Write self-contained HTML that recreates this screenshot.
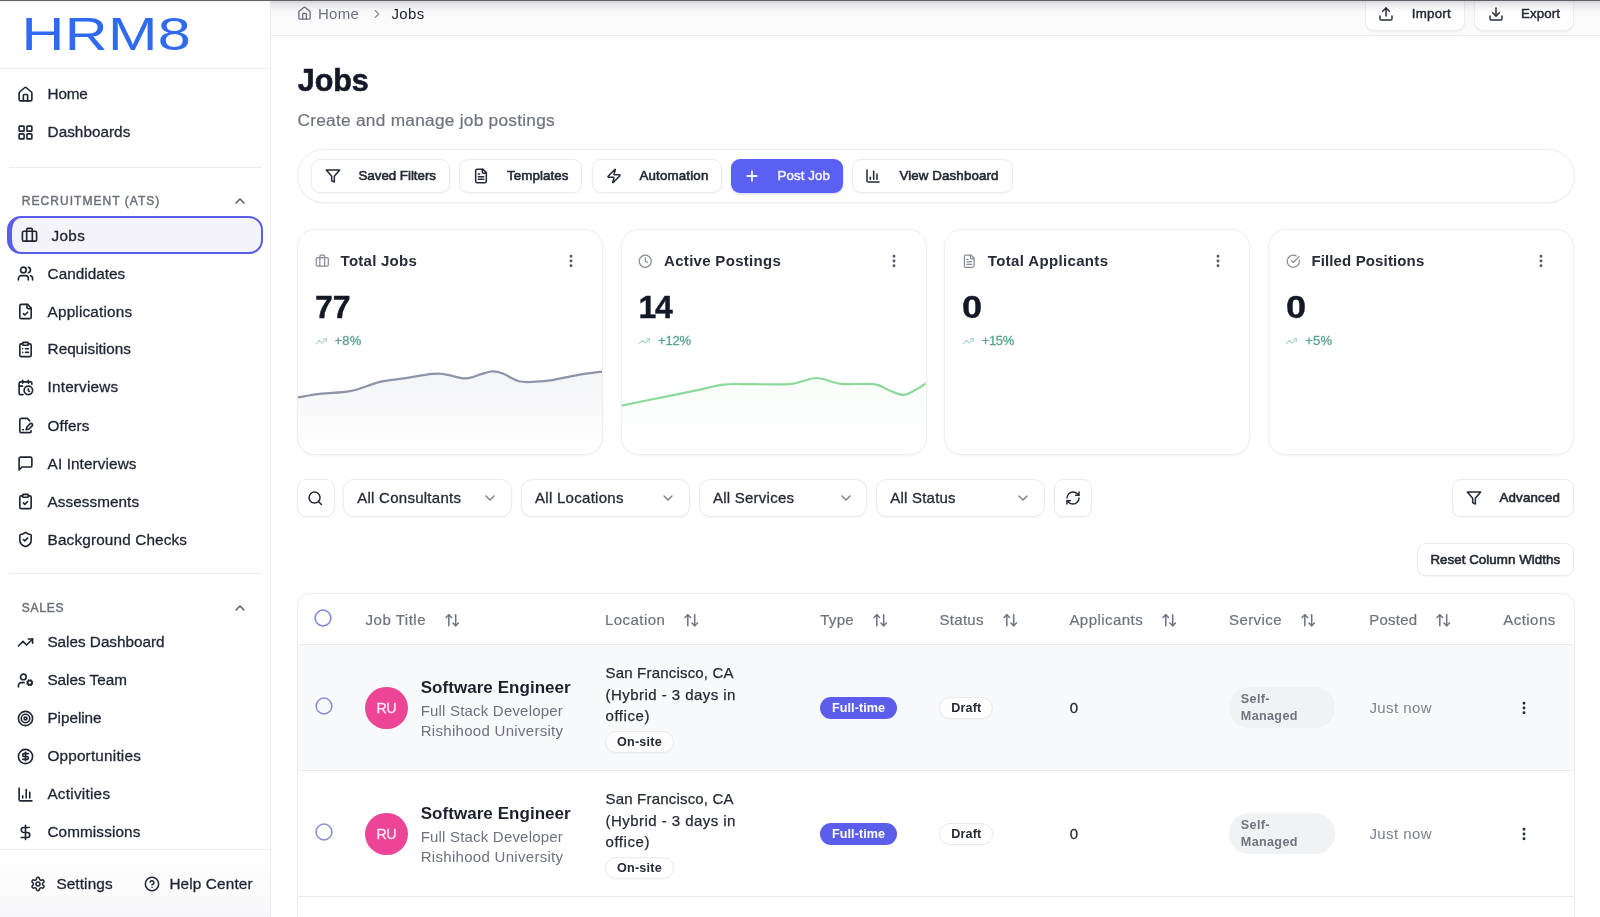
<!DOCTYPE html>
<html lang="en"><head>
<meta charset="utf-8">
<title>Jobs - HRM8</title>
<style>
*{box-sizing:border-box;margin:0;padding:0}
html,body{width:1600px;height:917px;overflow:hidden;background:#fff}
body{font-family:"Liberation Sans",Arial,sans-serif;color:#1c2230;position:relative;-webkit-font-smoothing:antialiased}
.abs{position:absolute}
.t{position:absolute;white-space:nowrap;line-height:1}
svg{position:absolute;overflow:visible}
.ic{fill:none;stroke:#1f2533;stroke-width:2;stroke-linecap:round;stroke-linejoin:round}
/* sidebar */
#app{position:absolute;left:0;top:0;width:1600px;height:917px;overflow:hidden;background:#fff;will-change:transform}
#sb{position:absolute;left:0;top:0;width:271px;height:917px;background:#fff;border-right:1px solid #ebecef}
.nav{position:absolute;left:47px;font-size:15.5px;color:#1f2533;white-space:nowrap;line-height:20px;height:20px}
.sec{position:absolute;left:21px;font-size:12.5px;color:#6b7180;letter-spacing:1px;white-space:nowrap;line-height:16px;font-weight:400}
.hr{position:absolute;height:1px;background:#e9eaee}
/* main */
#main{position:absolute;left:271px;top:0;width:1329px;height:917px;background:#fff}
.btn{position:absolute;border:1px solid #e6e7eb;border-radius:8px;background:#fff;box-shadow:0 1px 2px rgba(16,24,40,.05)}
.bt{position:absolute;white-space:nowrap;font-size:13px;font-weight:700;color:#272c38;line-height:16px}
.card{position:absolute;top:228.5px;width:306px;height:226px;border:1px solid #eeeff2;border-radius:18px;background:#fff;box-shadow:0 1px 3px rgba(16,24,40,.05);overflow:hidden}
</style>
</head>
<body>
<div id="app">
<div id="sb"><svg style="left:20px;top:10px" width="180" height="50" viewBox="0 0 180 50"><text transform="translate(1.5 40.3) scale(1.275 1)" font-family="Liberation Sans, Arial, sans-serif" font-size="46.6" fill="#2f6bf2" textLength="132.8" lengthAdjust="spacing">HRM8</text></svg><div class="abs" style="left:0px;top:68px;width:270px;height:1px;background:#ececf0"></div><svg class="ic" style="left:17.1px;top:85.5px;stroke:#1f2533;stroke-width:2.3" width="17" height="17" viewBox="0 0 24 24"><path d="M15 21v-8a1 1 0 0 0-1-1h-4a1 1 0 0 0-1 1v8"></path><path d="M3 10a2 2 0 0 1 .709-1.528l7-5.999a2 2 0 0 1 2.582 0l7 5.999A2 2 0 0 1 21 10v9a2 2 0 0 1-2 2H5a2 2 0 0 1-2-2z"></path></svg><span class="t" style="left: 47.6px; top: 84px; font-size: 15.3px; line-height: 20px; color: rgb(31, 37, 51); font-weight: 400; -webkit-text-stroke: 0.3px; letter-spacing: -0.178px;">Home</span><svg class="ic" style="left:17.1px;top:123.5px;stroke:#1f2533;stroke-width:2.3" width="17" height="17" viewBox="0 0 24 24"><rect width="7" height="7" x="3" y="3" rx="1"></rect><rect width="7" height="7" x="14" y="3" rx="1"></rect><rect width="7" height="7" x="14" y="14" rx="1"></rect><rect width="7" height="7" x="3" y="14" rx="1"></rect></svg><span class="t" style="left: 47.6px; top: 122px; font-size: 15.3px; line-height: 20px; color: rgb(31, 37, 51); font-weight: 400; -webkit-text-stroke: 0.3px; letter-spacing: 0.022px;">Dashboards</span><div class="abs" style="left:9px;top:167px;width:253px;height:1px;background:#ececf0"></div><span class="t" style="left: 21.8px; top: 193px; font-size: 12px; line-height: 16px; color: rgb(108, 112, 123); font-weight: 400; -webkit-text-stroke: 0.45px; letter-spacing: 1.042px;">RECRUITMENT (ATS)</span><svg class="ic" style="left:232px;top:193px;stroke:#4b5160;stroke-width:2" width="16" height="16" viewBox="0 0 24 24"><path d="m18 15-6-6-6 6"></path></svg><div class="abs" style="left:7px;top:216.4px;width:256px;height:37.8px;border:2px solid #5a5ee6;border-left-width:5px;border-radius:14px;background:#f3f3f8"></div><svg class="ic" style="left:20.9px;top:227px;stroke:#1f2533;stroke-width:2.3" width="17" height="17" viewBox="0 0 24 24"><path d="M16 20V4a2 2 0 0 0-2-2h-4a2 2 0 0 0-2 2v16"></path><rect width="20" height="14" x="2" y="6" rx="2"></rect></svg><span class="t" style="left: 51.4px; top: 226px; font-size: 15.3px; line-height: 20px; color: rgb(31, 37, 51); font-weight: 400; -webkit-text-stroke: 0.3px; letter-spacing: 0.372px;">Jobs</span><svg class="ic" style="left:17.1px;top:265.2px;stroke:#1f2533;stroke-width:2.3" width="17" height="17" viewBox="0 0 24 24"><path d="M16 21v-2a4 4 0 0 0-4-4H6a4 4 0 0 0-4 4v2"></path><circle cx="9" cy="7" r="4"></circle><path d="M22 21v-2a4 4 0 0 0-3-3.87"></path><path d="M16 3.13a4 4 0 0 1 0 7.75"></path></svg><span class="t" style="left: 47.6px; top: 264px; font-size: 15.3px; line-height: 20px; color: rgb(31, 37, 51); font-weight: 400; -webkit-text-stroke: 0.3px; letter-spacing: 0.031px;">Candidates</span><svg class="ic" style="left:17.1px;top:303.2px;stroke:#1f2533;stroke-width:2.3" width="17" height="17" viewBox="0 0 24 24"><path d="M15 2H6a2 2 0 0 0-2 2v16a2 2 0 0 0 2 2h12a2 2 0 0 0 2-2V7Z"></path><path d="M14 2v4a2 2 0 0 0 2 2h4"></path><path d="m9 15 2 2 4-4"></path></svg><span class="t" style="left: 47.6px; top: 302px; font-size: 15.3px; line-height: 20px; color: rgb(31, 37, 51); font-weight: 400; -webkit-text-stroke: 0.3px; letter-spacing: 0.185px;">Applications</span><svg class="ic" style="left:17.1px;top:341.0px;stroke:#1f2533;stroke-width:2.3" width="17" height="17" viewBox="0 0 24 24"><rect width="8" height="4" x="8" y="2" rx="1" ry="1"></rect><path d="M16 4h2a2 2 0 0 1 2 2v14a2 2 0 0 1-2 2H6a2 2 0 0 1-2-2V6a2 2 0 0 1 2-2h2"></path><path d="M12 11h4"></path><path d="M12 16h4"></path><path d="M8 11h.01"></path><path d="M8 16h.01"></path></svg><span class="t" style="left: 47.6px; top: 339px; font-size: 15.3px; line-height: 20px; color: rgb(31, 37, 51); font-weight: 400; -webkit-text-stroke: 0.3px; letter-spacing: -0.011px;">Requisitions</span><svg class="ic" style="left:17.1px;top:379.0px;stroke:#1f2533;stroke-width:2.3" width="17" height="17" viewBox="0 0 24 24"><path d="M21 7.5V6a2 2 0 0 0-2-2H5a2 2 0 0 0-2 2v14a2 2 0 0 0 2 2h3.5"></path><path d="M16 2v4"></path><path d="M8 2v4"></path><path d="M3 10h5"></path><path d="M17.5 17.5 16 16.3V14"></path><circle cx="16" cy="16" r="6"></circle></svg><span class="t" style="left: 47.6px; top: 377px; font-size: 15.3px; line-height: 20px; color: rgb(31, 37, 51); font-weight: 400; -webkit-text-stroke: 0.3px; letter-spacing: 0.184px;">Interviews</span><svg class="ic" style="left:17.1px;top:417.2px;stroke:#1f2533;stroke-width:2.3" width="17" height="17" viewBox="0 0 24 24"><path d="M20 19.5v.5a2 2 0 0 1-2 2H6a2 2 0 0 1-2-2V4a2 2 0 0 1 2-2h8.5L18 5.5"></path><path d="M8 18h1"></path><path d="M18.42 9.61a2.1 2.1 0 1 1 2.97 2.97L16.95 17 13 18l.99-3.95 4.43-4.44Z"></path></svg><span class="t" style="left: 47.6px; top: 416px; font-size: 15.3px; line-height: 20px; color: rgb(31, 37, 51); font-weight: 400; -webkit-text-stroke: 0.3px; letter-spacing: 0.087px;">Offers</span><svg class="ic" style="left:17.1px;top:455.09999999999997px;stroke:#1f2533;stroke-width:2.3" width="17" height="17" viewBox="0 0 24 24"><path d="M21 15a2 2 0 0 1-2 2H7l-4 4V5a2 2 0 0 1 2-2h14a2 2 0 0 1 2 2z"></path></svg><span class="t" style="left: 47.6px; top: 454px; font-size: 15.3px; line-height: 20px; color: rgb(31, 37, 51); font-weight: 400; -webkit-text-stroke: 0.3px; letter-spacing: 0.111px;">AI Interviews</span><svg class="ic" style="left:17.1px;top:493.2px;stroke:#1f2533;stroke-width:2.3" width="17" height="17" viewBox="0 0 24 24"><rect width="8" height="4" x="8" y="2" rx="1" ry="1"></rect><path d="M16 4h2a2 2 0 0 1 2 2v14a2 2 0 0 1-2 2H6a2 2 0 0 1-2-2V6a2 2 0 0 1 2-2h2"></path><path d="m9 14 2 2 4-4"></path></svg><span class="t" style="left: 47.6px; top: 492px; font-size: 15.3px; line-height: 20px; color: rgb(31, 37, 51); font-weight: 400; -webkit-text-stroke: 0.3px; letter-spacing: 0.048px;">Assessments</span><svg class="ic" style="left:17.1px;top:531.3000000000001px;stroke:#1f2533;stroke-width:2.3" width="17" height="17" viewBox="0 0 24 24"><path d="M20 13c0 5-3.5 7.5-7.66 8.95a1 1 0 0 1-.67-.01C7.5 20.5 4 18 4 13V6a1 1 0 0 1 1-1c2 0 4.5-1.2 6.24-2.72a1.17 1.17 0 0 1 1.52 0C14.51 3.81 17 5 19 5a1 1 0 0 1 1 1z"></path><path d="m9 12 2 2 4-4"></path></svg><span class="t" style="left: 47.6px; top: 530px; font-size: 15.3px; line-height: 20px; color: rgb(31, 37, 51); font-weight: 400; -webkit-text-stroke: 0.3px; letter-spacing: 0.158px;">Background Checks</span><div class="abs" style="left:9px;top:573px;width:253px;height:1px;background:#ececf0"></div><span class="t" style="left: 21.8px; top: 600px; font-size: 12px; line-height: 16px; color: rgb(108, 112, 123); font-weight: 400; -webkit-text-stroke: 0.45px; letter-spacing: 0.779px;">SALES</span><svg class="ic" style="left:232px;top:600px;stroke:#4b5160;stroke-width:2" width="16" height="16" viewBox="0 0 24 24"><path d="m18 15-6-6-6 6"></path></svg><svg class="ic" style="left:17.1px;top:633.9000000000001px;stroke:#1f2533;stroke-width:2.3" width="17" height="17" viewBox="0 0 24 24"><polyline points="22 7 13.5 15.5 8.5 10.5 2 17"></polyline><polyline points="16 7 22 7 22 13"></polyline></svg><span class="t" style="left: 47.4px; top: 632px; font-size: 15.3px; line-height: 20px; color: rgb(31, 37, 51); font-weight: 400; -webkit-text-stroke: 0.3px; letter-spacing: -0.011px;">Sales Dashboard</span><svg class="ic" style="left:17.1px;top:671.9000000000001px;stroke:#1f2533;stroke-width:2.3" width="17" height="17" viewBox="0 0 24 24"><circle cx="18" cy="15" r="3"></circle><circle cx="9" cy="7" r="4"></circle><path d="M10 15H6a4 4 0 0 0-4 4v2"></path><path d="m21.7 16.4-.9-.3"></path><path d="m15.2 13.9-.9-.3"></path><path d="m16.6 18.7.3-.9"></path><path d="m19.1 12.2.3-.9"></path><path d="m19.6 18.7-.4-1"></path><path d="m16.8 12.3-.4-1"></path><path d="m14.3 16.6 1-.4"></path><path d="m20.7 13.8 1-.4"></path></svg><span class="t" style="left: 47.4px; top: 670px; font-size: 15.3px; line-height: 20px; color: rgb(31, 37, 51); font-weight: 400; -webkit-text-stroke: 0.3px; letter-spacing: -0.016px;">Sales Team</span><svg class="ic" style="left:17.1px;top:709.9000000000001px;stroke:#1f2533;stroke-width:2.3" width="17" height="17" viewBox="0 0 24 24"><circle cx="12" cy="12" r="10"></circle><circle cx="12" cy="12" r="6"></circle><circle cx="12" cy="12" r="2"></circle></svg><span class="t" style="left: 47.4px; top: 708px; font-size: 15.3px; line-height: 20px; color: rgb(31, 37, 51); font-weight: 400; -webkit-text-stroke: 0.3px; letter-spacing: -0.03px;">Pipeline</span><svg class="ic" style="left:17.1px;top:748.0px;stroke:#1f2533;stroke-width:2.3" width="17" height="17" viewBox="0 0 24 24"><circle cx="12" cy="12" r="10"></circle><path d="M16 8h-6a2 2 0 1 0 0 4h4a2 2 0 1 1 0 4H8"></path><path d="M12 18V6"></path></svg><span class="t" style="left: 47.4px; top: 746px; font-size: 15.3px; line-height: 20px; color: rgb(31, 37, 51); font-weight: 400; -webkit-text-stroke: 0.3px; letter-spacing: 0.201px;">Opportunities</span><svg class="ic" style="left:17.1px;top:786.0px;stroke:#1f2533;stroke-width:2.3" width="17" height="17" viewBox="0 0 24 24"><path d="M3 3v16a2 2 0 0 0 2 2h16"></path><path d="M18 17V9"></path><path d="M13 17V5"></path><path d="M8 17v-3"></path></svg><span class="t" style="left: 47.4px; top: 784px; font-size: 15.3px; line-height: 20px; color: rgb(31, 37, 51); font-weight: 400; -webkit-text-stroke: 0.3px; letter-spacing: 0.254px;">Activities</span><svg class="ic" style="left:17.1px;top:824.0px;stroke:#1f2533;stroke-width:2.3" width="17" height="17" viewBox="0 0 24 24"><line x1="12" x2="12" y1="2" y2="22"></line><path d="M17 5H9.5a3.5 3.5 0 0 0 0 7h5a3.5 3.5 0 0 1 0 7H6"></path></svg><span class="t" style="left: 47.4px; top: 822px; font-size: 15.3px; line-height: 20px; color: rgb(31, 37, 51); font-weight: 400; -webkit-text-stroke: 0.3px; letter-spacing: 0.109px;">Commissions</span><div class="abs" style="left:0px;top:849px;width:270px;height:68px;background:linear-gradient(#fff,#f7f7f9);border-top:1px solid #ececf0"></div><svg class="ic" style="left:30.3px;top:876px;stroke:#1f2533;stroke-width:2.3" width="16" height="16" viewBox="0 0 24 24"><path d="M12.22 2h-.44a2 2 0 0 0-2 2v.18a2 2 0 0 1-1 1.73l-.43.25a2 2 0 0 1-2 0l-.15-.08a2 2 0 0 0-2.73.73l-.22.38a2 2 0 0 0 .73 2.73l.15.1a2 2 0 0 1 1 1.72v.51a2 2 0 0 1-1 1.74l-.15.09a2 2 0 0 0-.73 2.73l.22.38a2 2 0 0 0 2.73.73l.15-.08a2 2 0 0 1 2 0l.43.25a2 2 0 0 1 1 1.73V20a2 2 0 0 0 2 2h.44a2 2 0 0 0 2-2v-.18a2 2 0 0 1 1-1.73l.43-.25a2 2 0 0 1 2 0l.15.08a2 2 0 0 0 2.73-.73l.22-.39a2 2 0 0 0-.73-2.73l-.15-.08a2 2 0 0 1-1-1.74v-.5a2 2 0 0 1 1-1.74l.15-.09a2 2 0 0 0 .73-2.73l-.22-.38a2 2 0 0 0-2.73-.73l-.15.08a2 2 0 0 1-2 0l-.43-.25a2 2 0 0 1-1-1.73V4a2 2 0 0 0-2-2z"></path><circle cx="12" cy="12" r="3"></circle></svg><span class="t" style="left: 56.4px; top: 874px; font-size: 15.3px; line-height: 20px; color: rgb(31, 37, 51); font-weight: 400; -webkit-text-stroke: 0.3px; letter-spacing: 0.127px;">Settings</span><svg class="ic" style="left:144px;top:876px;stroke:#1f2533;stroke-width:2.3" width="16" height="16" viewBox="0 0 24 24"><circle cx="12" cy="12" r="10"></circle><path d="M9.09 9a3 3 0 0 1 5.83 1c0 2-3 3-3 3"></path><path d="M12 17h.01"></path></svg><span class="t" style="left: 169.4px; top: 874px; font-size: 15.3px; line-height: 20px; color: rgb(31, 37, 51); font-weight: 400; -webkit-text-stroke: 0.3px; letter-spacing: 0.152px;">Help Center</span></div>
<div class="abs" style="left:271px;top:0px;width:1329px;height:36px;background:#fafafb;border-bottom:1px solid #ebecef"></div><svg class="ic" style="left:296.8px;top:6.3px;stroke:#6b7180;stroke-width:2.2" width="15" height="15" viewBox="0 0 24 24"><path d="M15 21v-8a1 1 0 0 0-1-1h-4a1 1 0 0 0-1 1v8"></path><path d="M3 10a2 2 0 0 1 .709-1.528l7-5.999a2 2 0 0 1 2.582 0l7 5.999A2 2 0 0 1 21 10v9a2 2 0 0 1-2 2H5a2 2 0 0 1-2-2z"></path></svg><span class="t" style="left: 318px; top: 4px; font-size: 15px; line-height: 20px; color: rgb(109, 114, 126); font-weight: 400; letter-spacing: 0.246px;">Home</span><svg class="ic" style="left:370px;top:7px;stroke:#8a8f9b;stroke-width:2" width="14" height="14" viewBox="0 0 24 24"><path d="m9 18 6-6-6-6"></path></svg><span class="t" style="left: 391.5px; top: 4px; font-size: 15px; line-height: 20px; color: rgb(28, 34, 48); font-weight: 400; letter-spacing: 0.328px;">Jobs</span><div class="abs" style="left:1365px;top:-8px;width:100px;height:38.5px;border:1px solid #ececef;border-radius:9px;background:#fff;box-shadow:0 1px 2px rgba(16,24,40,.05);"></div><svg class="ic" style="left:1377.8px;top:6px;stroke:#252a36;stroke-width:2.2" width="16" height="16" viewBox="0 0 24 24"><path d="M21 15v4a2 2 0 0 1-2 2H5a2 2 0 0 1-2-2v-4"></path><polyline points="17 8 12 3 7 8"></polyline><line x1="12" x2="12" y1="3" y2="15"></line></svg><span class="t" style="left: 1411.8px; top: 4px; font-size: 13.3px; line-height: 20px; color: rgb(37, 42, 54); font-weight: 400; -webkit-text-stroke: 0.45px; letter-spacing: 0.235px;">Import</span><div class="abs" style="left:1474px;top:-8px;width:100px;height:38.5px;border:1px solid #ececef;border-radius:9px;background:#fff;box-shadow:0 1px 2px rgba(16,24,40,.05);"></div><svg class="ic" style="left:1487.6px;top:6px;stroke:#252a36;stroke-width:2.2" width="16" height="16" viewBox="0 0 24 24"><path d="M21 15v4a2 2 0 0 1-2 2H5a2 2 0 0 1-2-2v-4"></path><polyline points="7 10 12 15 17 10"></polyline><line x1="12" x2="12" y1="15" y2="3"></line></svg><span class="t" style="left: 1521px; top: 4px; font-size: 13.3px; line-height: 20px; color: rgb(37, 42, 54); font-weight: 400; -webkit-text-stroke: 0.45px; letter-spacing: 0.094px;">Export</span><span class="t" style="left: 297.8px; top: 62px; font-size: 30.5px; line-height: 36px; color: rgb(20, 25, 39); font-weight: 700; -webkit-text-stroke: 0.6px; letter-spacing: -0.097px;">Jobs</span><span class="t" style="left: 297.5px; top: 108px; font-size: 17.3px; line-height: 24px; color: rgb(110, 115, 125); font-weight: 400; -webkit-text-stroke: 0.2px; letter-spacing: 0.257px;">Create and manage job postings</span><div class="abs" style="left:297px;top:149px;width:1277.5px;height:53.5px;border:1px solid #ececef;border-radius:27px;background:#fff;box-shadow:0 1px 2px rgba(16,24,40,.04)"></div><div class="abs" style="left:311px;top:159px;width:139px;height:33.5px;border:1px solid #ececef;border-radius:9px;background:#fff;box-shadow:0 1px 2px rgba(16,24,40,.05);"></div><svg class="ic" style="left:324.5px;top:168px;stroke:#252a36;stroke-width:2.3" width="16" height="16" viewBox="0 0 24 24"><polygon points="22 3 2 3 10 12.46 10 19 14 21 14 12.46 22 3"></polygon></svg><span class="t" style="left: 358.5px; top: 166px; font-size: 13.3px; line-height: 20px; color: rgb(37, 42, 54); font-weight: 400; -webkit-text-stroke: 0.6px; letter-spacing: -0.007px;">Saved Filters</span><div class="abs" style="left:459px;top:159px;width:123px;height:33.5px;border:1px solid #ececef;border-radius:9px;background:#fff;box-shadow:0 1px 2px rgba(16,24,40,.05);"></div><svg class="ic" style="left:472.5px;top:168px;stroke:#252a36;stroke-width:2.3" width="16" height="16" viewBox="0 0 24 24"><path d="M15 2H6a2 2 0 0 0-2 2v16a2 2 0 0 0 2 2h12a2 2 0 0 0 2-2V7Z"></path><path d="M14 2v4a2 2 0 0 0 2 2h4"></path><path d="M10 9H8"></path><path d="M16 13H8"></path><path d="M16 17H8"></path></svg><span class="t" style="left: 507px; top: 166px; font-size: 13.3px; line-height: 20px; color: rgb(37, 42, 54); font-weight: 400; -webkit-text-stroke: 0.6px; letter-spacing: 0.099px;">Templates</span><div class="abs" style="left:591.5px;top:159px;width:130.5px;height:33.5px;border:1px solid #ececef;border-radius:9px;background:#fff;box-shadow:0 1px 2px rgba(16,24,40,.05);"></div><svg class="ic" style="left:605.5px;top:168px;stroke:#252a36;stroke-width:2.3" width="16" height="16" viewBox="0 0 24 24"><path d="M4 14a1 1 0 0 1-.78-1.63l9.9-10.2a.5.5 0 0 1 .86.46l-1.92 6.02A1 1 0 0 0 13 10h7a1 1 0 0 1 .78 1.63l-9.9 10.2a.5.5 0 0 1-.86-.46l1.92-6.02A1 1 0 0 0 11 14z"></path></svg><span class="t" style="left: 639.5px; top: 166px; font-size: 13.3px; line-height: 20px; color: rgb(37, 42, 54); font-weight: 400; -webkit-text-stroke: 0.6px; letter-spacing: 0.173px;">Automation</span><div class="abs" style="left:731px;top:159px;width:112px;height:33.5px;border-radius:9px;background:#5a60f1;box-shadow:0 1px 3px rgba(89,93,240,.28)"></div><svg class="ic" style="left:744px;top:168px;stroke:#f0f1ff;stroke-width:2.7" width="16" height="16" viewBox="0 0 24 24"><path d="M5 12h14"></path><path d="M12 5v14"></path></svg><span class="t" style="left: 777.5px; top: 166px; font-size: 13.3px; line-height: 20px; color: rgb(240, 241, 255); font-weight: 400; -webkit-text-stroke: 0.5px; letter-spacing: 0.094px;">Post Job</span><div class="abs" style="left:852px;top:159px;width:160.5px;height:33.5px;border:1px solid #ececef;border-radius:9px;background:#fff;box-shadow:0 1px 2px rgba(16,24,40,.05);"></div><svg class="ic" style="left:865.0px;top:168px;stroke:#252a36;stroke-width:2.3" width="16" height="16" viewBox="0 0 24 24"><path d="M3 3v16a2 2 0 0 0 2 2h16"></path><path d="M18 17V9"></path><path d="M13 17V5"></path><path d="M8 17v-3"></path></svg><span class="t" style="left: 899.5px; top: 166px; font-size: 13.3px; line-height: 20px; color: rgb(37, 42, 54); font-weight: 400; -webkit-text-stroke: 0.6px; letter-spacing: 0.119px;">View Dashboard</span><div class="card" style="left:297px"></div><svg class="ic" style="left:314.8px;top:253.5px;stroke:#868b96;stroke-width:2" width="14.5" height="14.5" viewBox="0 0 24 24"><path d="M16 20V4a2 2 0 0 0-2-2h-4a2 2 0 0 0-2 2v16"></path><rect width="20" height="14" x="2" y="6" rx="2"></rect></svg><span class="t" style="left: 340.6px; top: 251px; font-size: 15px; line-height: 20px; color: rgb(39, 44, 56); font-weight: 700; letter-spacing: 0.249px;">Total Jobs</span><svg class="ic" style="left:562.6px;top:252.8px;stroke:#555a66;stroke-width:2.4" width="16" height="16" viewBox="0 0 24 24"><circle cx="12" cy="12" r="1"></circle><circle cx="12" cy="5" r="1"></circle><circle cx="12" cy="19" r="1"></circle></svg><span class="t" style="left: 315px; top: 289px; font-size: 32px; line-height: 36px; color: rgb(20, 25, 39); font-weight: 700; -webkit-text-stroke: 0.4px; letter-spacing: -0.047px;">77</span><svg class="ic" style="left:314.5px;top:334.5px;stroke:#a9d8c5;stroke-width:2" width="12.5" height="12.5" viewBox="0 0 24 24"><polyline points="22 7 13.5 15.5 8.5 10.5 2 17"></polyline><polyline points="16 7 22 7 22 13"></polyline></svg><span class="t" style="left: 334.5px; top: 333px; font-size: 13px; line-height: 16px; color: rgb(85, 166, 136); font-weight: 400; -webkit-text-stroke: 0.3px; letter-spacing: 0.27px;">+8%</span><div class="card" style="left:620.5px"></div><svg class="ic" style="left:638.3px;top:253.5px;stroke:#868b96;stroke-width:2" width="14.5" height="14.5" viewBox="0 0 24 24"><circle cx="12" cy="12" r="10"></circle><polyline points="12 6 12 12 16 14"></polyline></svg><span class="t" style="left: 664.1px; top: 251px; font-size: 15px; line-height: 20px; color: rgb(39, 44, 56); font-weight: 700; letter-spacing: 0.298px;">Active Postings</span><svg class="ic" style="left:886.1px;top:252.8px;stroke:#555a66;stroke-width:2.4" width="16" height="16" viewBox="0 0 24 24"><circle cx="12" cy="12" r="1"></circle><circle cx="12" cy="5" r="1"></circle><circle cx="12" cy="19" r="1"></circle></svg><span class="t" style="left: 638.5px; top: 289px; font-size: 32px; line-height: 36px; color: rgb(20, 25, 39); font-weight: 700; -webkit-text-stroke: 0.4px; letter-spacing: -1.297px;">14</span><svg class="ic" style="left:638.0px;top:334.5px;stroke:#a9d8c5;stroke-width:2" width="12.5" height="12.5" viewBox="0 0 24 24"><polyline points="22 7 13.5 15.5 8.5 10.5 2 17"></polyline><polyline points="16 7 22 7 22 13"></polyline></svg><span class="t" style="left: 658px; top: 333px; font-size: 13px; line-height: 16px; color: rgb(85, 166, 136); font-weight: 400; -webkit-text-stroke: 0.3px; letter-spacing: -0.156px;">+12%</span><div class="card" style="left:944.2px"></div><svg class="ic" style="left:962.0px;top:253.5px;stroke:#868b96;stroke-width:2" width="14.5" height="14.5" viewBox="0 0 24 24"><path d="M15 2H6a2 2 0 0 0-2 2v16a2 2 0 0 0 2 2h12a2 2 0 0 0 2-2V7Z"></path><path d="M14 2v4a2 2 0 0 0 2 2h4"></path><path d="M10 9H8"></path><path d="M16 13H8"></path><path d="M16 17H8"></path></svg><span class="t" style="left: 987.8px; top: 251px; font-size: 15px; line-height: 20px; color: rgb(39, 44, 56); font-weight: 700; letter-spacing: 0.349px;">Total Applicants</span><svg class="ic" style="left:1209.8000000000002px;top:252.8px;stroke:#555a66;stroke-width:2.4" width="16" height="16" viewBox="0 0 24 24"><circle cx="12" cy="12" r="1"></circle><circle cx="12" cy="5" r="1"></circle><circle cx="12" cy="19" r="1"></circle></svg><span class="t" style="left:962.2px;top:289.00px;font-size:32px;line-height:36px;color:#141927;font-weight:700;transform:scaleX(1.13);transform-origin:0 50%;-webkit-text-stroke:0.4px;">0</span><svg class="ic" style="left:961.7px;top:334.5px;stroke:#a9d8c5;stroke-width:2" width="12.5" height="12.5" viewBox="0 0 24 24"><polyline points="22 7 13.5 15.5 8.5 10.5 2 17"></polyline><polyline points="16 7 22 7 22 13"></polyline></svg><span class="t" style="left: 981.7px; top: 333px; font-size: 13px; line-height: 16px; color: rgb(85, 166, 136); font-weight: 400; -webkit-text-stroke: 0.3px; letter-spacing: -0.331px;">+15%</span><div class="card" style="left:1267.8px"></div><svg class="ic" style="left:1285.6px;top:253.5px;stroke:#868b96;stroke-width:2" width="14.5" height="14.5" viewBox="0 0 24 24"><path d="M21.801 10A10 10 0 1 1 17 3.335"></path><path d="m9 11 3 3L22 4"></path></svg><span class="t" style="left: 1311.4px; top: 251px; font-size: 15px; line-height: 20px; color: rgb(39, 44, 56); font-weight: 700; letter-spacing: 0.134px;">Filled Positions</span><svg class="ic" style="left:1533.4px;top:252.8px;stroke:#555a66;stroke-width:2.4" width="16" height="16" viewBox="0 0 24 24"><circle cx="12" cy="12" r="1"></circle><circle cx="12" cy="5" r="1"></circle><circle cx="12" cy="19" r="1"></circle></svg><span class="t" style="left:1285.8px;top:289.00px;font-size:32px;line-height:36px;color:#141927;font-weight:700;transform:scaleX(1.13);transform-origin:0 50%;-webkit-text-stroke:0.4px;">0</span><svg class="ic" style="left:1285.3px;top:334.5px;stroke:#a9d8c5;stroke-width:2" width="12.5" height="12.5" viewBox="0 0 24 24"><polyline points="22 7 13.5 15.5 8.5 10.5 2 17"></polyline><polyline points="16 7 22 7 22 13"></polyline></svg><span class="t" style="left: 1305.3px; top: 333px; font-size: 13px; line-height: 16px; color: rgb(85, 166, 136); font-weight: 400; -webkit-text-stroke: 0.3px; letter-spacing: 0.136px;">+5%</span><svg style="left:0;top:0" width="1600" height="917" viewBox="0 0 1600 917"><defs><linearGradient id="g1" x1="0" y1="0" x2="0" y2="1"><stop offset="0" stop-color="#8b93a7" stop-opacity=".10"></stop><stop offset="1" stop-color="#8b93a7" stop-opacity="0"></stop></linearGradient><linearGradient id="g2" x1="0" y1="0" x2="0" y2="1"><stop offset="0" stop-color="#7fd58f" stop-opacity=".05"></stop><stop offset="1" stop-color="#7fd58f" stop-opacity="0"></stop></linearGradient><clipPath id="c1"><rect x="298" y="230" width="304" height="224" rx="17"></rect></clipPath><clipPath id="c2"><rect x="621.5" y="230" width="304" height="224" rx="17"></rect></clipPath></defs><g clip-path="url(#c1)"><path d="M297.5 397.4 C301.5 396.8 312.5 394.7 321.3 393.7 C330.0 392.6 340.5 393.1 350.1 391.2 C359.8 389.3 370.1 384.3 379.0 382.1 C387.9 380.0 394.8 379.8 403.8 378.4 C412.7 377.0 425.8 374.6 432.6 373.9 C439.5 373.2 439.5 373.5 445.0 374.3 C450.5 375.0 459.5 378.5 465.6 378.4 C471.8 378.3 477.7 375.0 482.1 373.9 C486.6 372.7 489.0 371.5 492.5 371.4 C495.9 371.3 498.3 371.8 502.8 373.5 C507.2 375.1 513.8 379.9 519.3 381.3 C524.8 382.7 530.3 381.9 535.8 381.7 C541.3 381.5 545.4 381.2 552.3 380.1 C559.2 379.0 568.5 376.6 577.0 375.1 C585.6 373.7 599.1 372.0 603.5 371.4 L603.5 455 L297.5 455 Z" fill="url(#g1)"></path><path d="M297.5 397.4 C301.5 396.8 312.5 394.7 321.3 393.7 C330.0 392.6 340.5 393.1 350.1 391.2 C359.8 389.3 370.1 384.3 379.0 382.1 C387.9 380.0 394.8 379.8 403.8 378.4 C412.7 377.0 425.8 374.6 432.6 373.9 C439.5 373.2 439.5 373.5 445.0 374.3 C450.5 375.0 459.5 378.5 465.6 378.4 C471.8 378.3 477.7 375.0 482.1 373.9 C486.6 372.7 489.0 371.5 492.5 371.4 C495.9 371.3 498.3 371.8 502.8 373.5 C507.2 375.1 513.8 379.9 519.3 381.3 C524.8 382.7 530.3 381.9 535.8 381.7 C541.3 381.5 545.4 381.2 552.3 380.1 C559.2 379.0 568.5 376.6 577.0 375.1 C585.6 373.7 599.1 372.0 603.5 371.4" fill="none" stroke="#8d94a8" stroke-width="2.2"></path></g><g clip-path="url(#c2)"><path d="M621.2 405.6 C626.2 404.6 639.4 401.9 651.3 399.5 C663.2 397.0 680.5 393.7 692.5 391.2 C704.6 388.7 713.9 385.8 723.5 384.6 C733.1 383.4 739.0 384.3 750.3 384.2 C761.6 384.1 780.6 384.8 791.6 383.8 C802.6 382.7 808.1 378.0 816.3 378.0 C824.6 378.0 831.4 382.7 841.1 383.8 C850.7 384.8 866.2 383.2 874.1 384.2 C882.0 385.2 883.7 388.2 888.5 390.0 C893.3 391.8 898.5 394.9 902.9 394.9 C907.4 394.9 911.3 392.0 915.3 390.0 C919.4 387.9 925.2 383.8 927.2 382.5 L927.2 455 L621.2 455 Z" fill="url(#g2)"></path><path d="M621.2 405.6 C626.2 404.6 639.4 401.9 651.3 399.5 C663.2 397.0 680.5 393.7 692.5 391.2 C704.6 388.7 713.9 385.8 723.5 384.6 C733.1 383.4 739.0 384.3 750.3 384.2 C761.6 384.1 780.6 384.8 791.6 383.8 C802.6 382.7 808.1 378.0 816.3 378.0 C824.6 378.0 831.4 382.7 841.1 383.8 C850.7 384.8 866.2 383.2 874.1 384.2 C882.0 385.2 883.7 388.2 888.5 390.0 C893.3 391.8 898.5 394.9 902.9 394.9 C907.4 394.9 911.3 392.0 915.3 390.0 C919.4 387.9 925.2 383.8 927.2 382.5" fill="none" stroke="#8bda9a" stroke-width="2.2"></path></g></svg><div class="abs" style="left:297px;top:479px;width:37.5px;height:38.3px;border:1px solid #ececef;border-radius:9px;background:#fff;box-shadow:0 1px 2px rgba(16,24,40,.05);"></div><svg class="ic" style="left:307px;top:489.8px;stroke:#252a36;stroke-width:2.2" width="16.5" height="16.5" viewBox="0 0 24 24"><circle cx="11" cy="11" r="8"></circle><path d="m21 21-4.3-4.3"></path></svg><div class="abs" style="left:343.2px;top:479px;width:168.5px;height:38.3px;border:1px solid #ececef;border-radius:11px;background:#fff;box-shadow:0 1px 2px rgba(16,24,40,.05)"></div><span class="t" style="left: 357.2px; top: 488px; font-size: 15px; line-height: 20px; color: rgb(37, 42, 54); font-weight: 400; -webkit-text-stroke: 0.3px; letter-spacing: 0.263px;">All Consultants</span><svg class="ic" style="left:482.1px;top:490.3px;stroke:#7d828e;stroke-width:2.2" width="16" height="16" viewBox="0 0 24 24"><path d="m6 9 6 6 6-6"></path></svg><div class="abs" style="left:521.0px;top:479px;width:168.5px;height:38.3px;border:1px solid #ececef;border-radius:11px;background:#fff;box-shadow:0 1px 2px rgba(16,24,40,.05)"></div><span class="t" style="left: 535px; top: 488px; font-size: 15px; line-height: 20px; color: rgb(37, 42, 54); font-weight: 400; -webkit-text-stroke: 0.3px; letter-spacing: 0.287px;">All Locations</span><svg class="ic" style="left:659.9px;top:490.3px;stroke:#7d828e;stroke-width:2.2" width="16" height="16" viewBox="0 0 24 24"><path d="m6 9 6 6 6-6"></path></svg><div class="abs" style="left:698.9000000000001px;top:479px;width:168.5px;height:38.3px;border:1px solid #ececef;border-radius:11px;background:#fff;box-shadow:0 1px 2px rgba(16,24,40,.05)"></div><span class="t" style="left: 712.9px; top: 488px; font-size: 15px; line-height: 20px; color: rgb(37, 42, 54); font-weight: 400; -webkit-text-stroke: 0.3px; letter-spacing: 0.253px;">All Services</span><svg class="ic" style="left:837.8000000000001px;top:490.3px;stroke:#7d828e;stroke-width:2.2" width="16" height="16" viewBox="0 0 24 24"><path d="m6 9 6 6 6-6"></path></svg><div class="abs" style="left:876.3000000000001px;top:479px;width:168.5px;height:38.3px;border:1px solid #ececef;border-radius:11px;background:#fff;box-shadow:0 1px 2px rgba(16,24,40,.05)"></div><span class="t" style="left: 890.3px; top: 488px; font-size: 15px; line-height: 20px; color: rgb(37, 42, 54); font-weight: 400; -webkit-text-stroke: 0.3px; letter-spacing: 0.212px;">All Status</span><svg class="ic" style="left:1015.2px;top:490.3px;stroke:#7d828e;stroke-width:2.2" width="16" height="16" viewBox="0 0 24 24"><path d="m6 9 6 6 6-6"></path></svg><div class="abs" style="left:1054px;top:479px;width:38.3px;height:38.3px;border:1px solid #ececef;border-radius:9px;background:#fff;box-shadow:0 1px 2px rgba(16,24,40,.05);"></div><svg class="ic" style="left:1065px;top:490px;stroke:#252a36;stroke-width:2.2" width="16" height="16" viewBox="0 0 24 24"><path d="M3 12a9 9 0 0 1 9-9 9.75 9.75 0 0 1 6.74 2.74L21 8"></path><path d="M21 3v5h-5"></path><path d="M21 12a9 9 0 0 1-9 9 9.75 9.75 0 0 1-6.74-2.74L3 16"></path><path d="M8 16H3v5"></path></svg><div class="abs" style="left:1452px;top:479px;width:122px;height:38.3px;border:1px solid #ececef;border-radius:9px;background:#fff;box-shadow:0 1px 2px rgba(16,24,40,.05);"></div><svg class="ic" style="left:1465.5px;top:490.3px;stroke:#252a36;stroke-width:2.3" width="16" height="16" viewBox="0 0 24 24"><polygon points="22 3 2 3 10 12.46 10 19 14 21 14 12.46 22 3"></polygon></svg><span class="t" style="left: 1499.4px; top: 488px; font-size: 13.3px; line-height: 20px; color: rgb(37, 42, 54); font-weight: 400; -webkit-text-stroke: 0.6px; letter-spacing: 0.205px;">Advanced</span><div class="abs" style="left:1417.3px;top:543.2px;width:156.5px;height:33px;border:1px solid #ececef;border-radius:9px;background:#fff;box-shadow:0 1px 2px rgba(16,24,40,.05);"></div><span class="t" style="left: 1430.4px; top: 550px; font-size: 13.3px; line-height: 20px; color: rgb(37, 42, 54); font-weight: 400; -webkit-text-stroke: 0.6px; letter-spacing: 0.063px;">Reset Column Widths</span><div class="abs" style="left:297px;top:593px;width:1277.5px;height:340px;border:1px solid #ececef;border-radius:13px;background:#fff;box-shadow:0 1px 2px rgba(16,24,40,.04);overflow:hidden"></div><div class="abs" style="left:298px;top:645px;width:1275.5px;height:125.5px;background:#f8f9fb"></div><div class="abs" style="left:298px;top:644px;width:1275.5px;height:1px;background:#e9eaee"></div><div class="abs" style="left:298px;top:770px;width:1275.5px;height:1px;background:#e9eaee"></div><div class="abs" style="left:298px;top:896px;width:1275.5px;height:1px;background:#e9eaee"></div><svg style="left:314px;top:608.7px" width="18" height="18" viewBox="0 0 18 18"><circle cx="9" cy="9" r="7.9" fill="none" stroke="#7f83de" stroke-width="1.5"></circle></svg><span class="t" style="left: 365.6px; top: 610px; font-size: 15px; line-height: 20px; color: rgb(109, 114, 126); font-weight: 400; -webkit-text-stroke: 0.2px; letter-spacing: 0.503px;">Job Title</span><svg class="ic" style="left:443.8px;top:611.6px;stroke:#6b7180;stroke-width:2.2" width="16.5" height="16.5" viewBox="0 0 24 24"><path d="m21 16-4 4-4-4"></path><path d="M17 20V4"></path><path d="m3 8 4-4 4 4"></path><path d="M7 4v16"></path></svg><span class="t" style="left: 605px; top: 610px; font-size: 15px; line-height: 20px; color: rgb(109, 114, 126); font-weight: 400; -webkit-text-stroke: 0.2px; letter-spacing: 0.46px;">Location</span><svg class="ic" style="left:682.6999999999999px;top:611.6px;stroke:#6b7180;stroke-width:2.2" width="16.5" height="16.5" viewBox="0 0 24 24"><path d="m21 16-4 4-4-4"></path><path d="M17 20V4"></path><path d="m3 8 4-4 4 4"></path><path d="M7 4v16"></path></svg><span class="t" style="left: 820.2px; top: 610px; font-size: 15px; line-height: 20px; color: rgb(109, 114, 126); font-weight: 400; -webkit-text-stroke: 0.2px; letter-spacing: 0.317px;">Type</span><svg class="ic" style="left:871.8px;top:611.6px;stroke:#6b7180;stroke-width:2.2" width="16.5" height="16.5" viewBox="0 0 24 24"><path d="m21 16-4 4-4-4"></path><path d="M17 20V4"></path><path d="m3 8 4-4 4 4"></path><path d="M7 4v16"></path></svg><span class="t" style="left: 939.6px; top: 610px; font-size: 15px; line-height: 20px; color: rgb(109, 114, 126); font-weight: 400; -webkit-text-stroke: 0.2px; letter-spacing: 0.261px;">Status</span><svg class="ic" style="left:1001.5px;top:611.6px;stroke:#6b7180;stroke-width:2.2" width="16.5" height="16.5" viewBox="0 0 24 24"><path d="m21 16-4 4-4-4"></path><path d="M17 20V4"></path><path d="m3 8 4-4 4 4"></path><path d="M7 4v16"></path></svg><span class="t" style="left: 1069.4px; top: 610px; font-size: 15px; line-height: 20px; color: rgb(109, 114, 126); font-weight: 400; -webkit-text-stroke: 0.2px; letter-spacing: 0.458px;">Applicants</span><svg class="ic" style="left:1160.8px;top:611.6px;stroke:#6b7180;stroke-width:2.2" width="16.5" height="16.5" viewBox="0 0 24 24"><path d="m21 16-4 4-4-4"></path><path d="M17 20V4"></path><path d="m3 8 4-4 4 4"></path><path d="M7 4v16"></path></svg><span class="t" style="left: 1229px; top: 610px; font-size: 15px; line-height: 20px; color: rgb(109, 114, 126); font-weight: 400; -webkit-text-stroke: 0.2px; letter-spacing: 0.424px;">Service</span><svg class="ic" style="left:1299.5px;top:611.6px;stroke:#6b7180;stroke-width:2.2" width="16.5" height="16.5" viewBox="0 0 24 24"><path d="m21 16-4 4-4-4"></path><path d="M17 20V4"></path><path d="m3 8 4-4 4 4"></path><path d="M7 4v16"></path></svg><span class="t" style="left: 1369.3px; top: 610px; font-size: 15px; line-height: 20px; color: rgb(109, 114, 126); font-weight: 400; -webkit-text-stroke: 0.2px; letter-spacing: 0.216px;">Posted</span><svg class="ic" style="left:1434.8px;top:611.6px;stroke:#6b7180;stroke-width:2.2" width="16.5" height="16.5" viewBox="0 0 24 24"><path d="m21 16-4 4-4-4"></path><path d="M17 20V4"></path><path d="m3 8 4-4 4 4"></path><path d="M7 4v16"></path></svg><span class="t" style="left: 1503.2px; top: 610px; font-size: 15px; line-height: 20px; color: rgb(109, 114, 126); font-weight: 400; -webkit-text-stroke: 0.2px; letter-spacing: 0.471px;">Actions</span><svg style="left:314.6px;top:696.8px" width="18" height="18" viewBox="0 0 18 18"><circle cx="9" cy="9" r="7.9" fill="none" stroke="#8a8dd2" stroke-width="1.5"></circle></svg><div class="abs" style="left:365.4px;top:686.6px;width:42.5px;height:42.5px;border-radius:50%;background:#ec4598"></div><span class="t" style="left: 376.5px; top: 698px; font-size: 14.3px; line-height: 20px; color: rgb(255, 233, 244); font-weight: 400; -webkit-text-stroke: 0.3px; letter-spacing: -0.578px;">RU</span><span class="t" style="left: 420.7px; top: 677px; font-size: 17px; line-height: 22px; color: rgb(27, 32, 44); font-weight: 700; letter-spacing: 0.049px;">Software Engineer</span><span class="t" style="left: 420.7px; top: 701px; font-size: 15px; line-height: 20px; color: rgb(109, 114, 126); font-weight: 400; letter-spacing: 0.195px;">Full Stack Developer</span><span class="t" style="left: 420.7px; top: 721px; font-size: 15px; line-height: 20px; color: rgb(109, 114, 126); font-weight: 400; letter-spacing: 0.298px;">Rishihood University</span><span class="t" style="left: 605.5px; top: 663px; font-size: 15px; line-height: 20px; color: rgb(37, 42, 54); font-weight: 400; -webkit-text-stroke: 0.25px; letter-spacing: 0.191px;">San Francisco, CA</span><span class="t" style="left: 605.5px; top: 685px; font-size: 15px; line-height: 20px; color: rgb(37, 42, 54); font-weight: 400; -webkit-text-stroke: 0.25px; letter-spacing: 0.457px;">(Hybrid - 3 days in</span><span class="t" style="left: 605.5px; top: 706px; font-size: 15px; line-height: 20px; color: rgb(37, 42, 54); font-weight: 400; -webkit-text-stroke: 0.25px; letter-spacing: 0.56px;">office)</span><div class="abs" style="left:605px;top:730.8px;width:68.5px;height:22px;border:1px solid #e9eaee;border-radius:11px;background:rgba(255,255,255,.7);box-shadow:0 1px 2px rgba(16,24,40,.03)"></div><span class="t" style="left: 617px; top: 734px; font-size: 12.6px; line-height: 16px; color: rgb(37, 42, 54); font-weight: 700; letter-spacing: 0.23px;">On-site</span><div class="abs" style="left:820px;top:696.5px;width:76.8px;height:22.7px;border-radius:12px;background:#5a5eea"></div><span class="t" style="left: 832px; top: 700px; font-size: 12.6px; line-height: 16px; color: rgb(255, 255, 255); font-weight: 700; letter-spacing: 0.08px;">Full-time</span><div class="abs" style="left:939.2px;top:696.8px;width:53.8px;height:22.4px;border:1px solid #e9eaee;border-radius:11.5px;background:rgba(255,255,255,.7);box-shadow:0 1px 2px rgba(16,24,40,.03)"></div><span class="t" style="left: 951.2px; top: 700px; font-size: 12.6px; line-height: 16px; color: rgb(37, 42, 54); font-weight: 700; letter-spacing: 0.162px;">Draft</span><span class="t" style="left: 1069.8px; top: 698px; font-size: 15px; line-height: 20px; color: rgb(37, 42, 54); font-weight: 400; -webkit-text-stroke: 0.3px; letter-spacing: -0.044px;">0</span><div class="abs" style="left:1229px;top:687.2px;width:106px;height:40.7px;border-radius:20px;background:#f1f2f4"></div><span class="t" style="left: 1240.8px; top: 691px; font-size: 12.6px; line-height: 16px; color: rgb(111, 116, 127); font-weight: 700; letter-spacing: 0.341px;">Self-</span><span class="t" style="left: 1240.8px; top: 708px; font-size: 12.6px; line-height: 16px; color: rgb(111, 116, 127); font-weight: 700; letter-spacing: 0.344px;">Managed</span><span class="t" style="left: 1369.4px; top: 698px; font-size: 15px; line-height: 20px; color: rgb(124, 129, 140); font-weight: 400; letter-spacing: 0.425px;">Just now</span><svg class="ic" style="left:1515.9px;top:699.8px;stroke:#252a36;stroke-width:2.4" width="16" height="16" viewBox="0 0 24 24"><circle cx="12" cy="12" r="1"></circle><circle cx="12" cy="5" r="1"></circle><circle cx="12" cy="19" r="1"></circle></svg><svg style="left:314.6px;top:822.8px" width="18" height="18" viewBox="0 0 18 18"><circle cx="9" cy="9" r="7.9" fill="none" stroke="#8a8dd2" stroke-width="1.5"></circle></svg><div class="abs" style="left:365.4px;top:812.6px;width:42.5px;height:42.5px;border-radius:50%;background:#ec4598"></div><span class="t" style="left: 376.5px; top: 824px; font-size: 14.3px; line-height: 20px; color: rgb(255, 233, 244); font-weight: 400; -webkit-text-stroke: 0.3px; letter-spacing: -0.578px;">RU</span><span class="t" style="left: 420.7px; top: 803px; font-size: 17px; line-height: 22px; color: rgb(27, 32, 44); font-weight: 700; letter-spacing: 0.049px;">Software Engineer</span><span class="t" style="left: 420.7px; top: 827px; font-size: 15px; line-height: 20px; color: rgb(109, 114, 126); font-weight: 400; letter-spacing: 0.195px;">Full Stack Developer</span><span class="t" style="left: 420.7px; top: 847px; font-size: 15px; line-height: 20px; color: rgb(109, 114, 126); font-weight: 400; letter-spacing: 0.298px;">Rishihood University</span><span class="t" style="left: 605.5px; top: 789px; font-size: 15px; line-height: 20px; color: rgb(37, 42, 54); font-weight: 400; -webkit-text-stroke: 0.25px; letter-spacing: 0.191px;">San Francisco, CA</span><span class="t" style="left: 605.5px; top: 811px; font-size: 15px; line-height: 20px; color: rgb(37, 42, 54); font-weight: 400; -webkit-text-stroke: 0.25px; letter-spacing: 0.457px;">(Hybrid - 3 days in</span><span class="t" style="left: 605.5px; top: 832px; font-size: 15px; line-height: 20px; color: rgb(37, 42, 54); font-weight: 400; -webkit-text-stroke: 0.25px; letter-spacing: 0.56px;">office)</span><div class="abs" style="left:605px;top:856.8px;width:68.5px;height:22px;border:1px solid #e9eaee;border-radius:11px;background:rgba(255,255,255,.7);box-shadow:0 1px 2px rgba(16,24,40,.03)"></div><span class="t" style="left: 617px; top: 860px; font-size: 12.6px; line-height: 16px; color: rgb(37, 42, 54); font-weight: 700; letter-spacing: 0.23px;">On-site</span><div class="abs" style="left:820px;top:822.5px;width:76.8px;height:22.7px;border-radius:12px;background:#5a5eea"></div><span class="t" style="left: 832px; top: 826px; font-size: 12.6px; line-height: 16px; color: rgb(255, 255, 255); font-weight: 700; letter-spacing: 0.08px;">Full-time</span><div class="abs" style="left:939.2px;top:822.8px;width:53.8px;height:22.4px;border:1px solid #e9eaee;border-radius:11.5px;background:rgba(255,255,255,.7);box-shadow:0 1px 2px rgba(16,24,40,.03)"></div><span class="t" style="left: 951.2px; top: 826px; font-size: 12.6px; line-height: 16px; color: rgb(37, 42, 54); font-weight: 700; letter-spacing: 0.162px;">Draft</span><span class="t" style="left: 1069.8px; top: 824px; font-size: 15px; line-height: 20px; color: rgb(37, 42, 54); font-weight: 400; -webkit-text-stroke: 0.3px; letter-spacing: -0.044px;">0</span><div class="abs" style="left:1229px;top:813.2px;width:106px;height:40.7px;border-radius:20px;background:#f1f2f4"></div><span class="t" style="left: 1240.8px; top: 817px; font-size: 12.6px; line-height: 16px; color: rgb(111, 116, 127); font-weight: 700; letter-spacing: 0.341px;">Self-</span><span class="t" style="left: 1240.8px; top: 834px; font-size: 12.6px; line-height: 16px; color: rgb(111, 116, 127); font-weight: 700; letter-spacing: 0.344px;">Managed</span><span class="t" style="left: 1369.4px; top: 824px; font-size: 15px; line-height: 20px; color: rgb(124, 129, 140); font-weight: 400; letter-spacing: 0.425px;">Just now</span><svg class="ic" style="left:1515.9px;top:825.8px;stroke:#252a36;stroke-width:2.4" width="16" height="16" viewBox="0 0 24 24"><circle cx="12" cy="12" r="1"></circle><circle cx="12" cy="5" r="1"></circle><circle cx="12" cy="19" r="1"></circle></svg><div class="abs" style="left:271px;top:0px;width:1329px;height:14px;background:linear-gradient(rgba(40,42,55,.22) 0px,rgba(40,42,55,.1) 4px,rgba(40,42,55,.03) 9px,rgba(40,42,55,0) 14px);pointer-events:none"></div><div class="abs" style="left:0px;top:0px;width:271px;height:8px;background:linear-gradient(rgba(40,42,55,.05),rgba(40,42,55,0))"></div><div class="abs" style="left:0px;top:0px;width:1600px;height:1px;background:#606268"></div>
</div>


</body></html>
